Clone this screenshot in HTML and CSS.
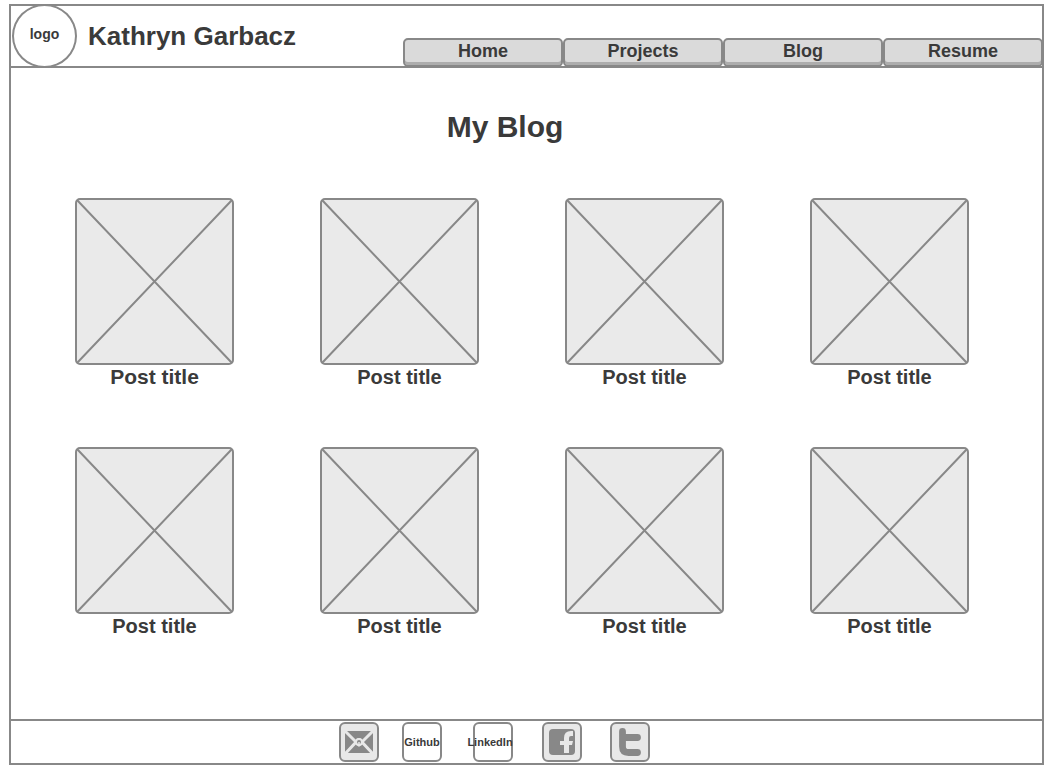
FILE: index.html
```html
<!DOCTYPE html>
<html lang="en">
<head>
<meta charset="utf-8">
<meta name="viewport" content="width=device-width, initial-scale=1">
<title>Kathryn Garbacz – My Blog</title>
<link rel="stylesheet" href="styles.css">
</head>
<body>
<svg width="0" height="0" class="defs" aria-hidden="true">
  <symbol id="placeholder" viewBox="0 0 159 167" preserveAspectRatio="none">
    <rect x="1" y="1" width="157" height="165" rx="4" fill="#eaeaea" stroke="#888" stroke-width="2"/>
    <path d="M2 2L157 165M157 2L2 165" fill="none" stroke="#888" stroke-width="2"/>
  </symbol>
</svg>
<div class="frame">
  <header class="header">
    <a class="logo" href="#">logo</a>
    <div class="name">Kathryn Garbacz</div>
    <nav class="tabs">
      <a class="tab" href="#">Home</a>
      <a class="tab" href="#">Projects</a>
      <a class="tab" href="#">Blog</a>
      <a class="tab" href="#">Resume</a>
    </nav>
  </header>
  <main class="main">
    <h1 class="heading">My Blog</h1>
    <div class="posts">
      <article class="post"><svg class="thumb" aria-hidden="true"><use href="#placeholder"/></svg><h2 class="title title-lead">Post title</h2></article>
      <article class="post"><svg class="thumb" aria-hidden="true"><use href="#placeholder"/></svg><h2 class="title">Post title</h2></article>
      <article class="post"><svg class="thumb" aria-hidden="true"><use href="#placeholder"/></svg><h2 class="title">Post title</h2></article>
      <article class="post"><svg class="thumb" aria-hidden="true"><use href="#placeholder"/></svg><h2 class="title">Post title</h2></article>
      <article class="post"><svg class="thumb" aria-hidden="true"><use href="#placeholder"/></svg><h2 class="title">Post title</h2></article>
      <article class="post"><svg class="thumb" aria-hidden="true"><use href="#placeholder"/></svg><h2 class="title">Post title</h2></article>
      <article class="post"><svg class="thumb" aria-hidden="true"><use href="#placeholder"/></svg><h2 class="title">Post title</h2></article>
      <article class="post"><svg class="thumb" aria-hidden="true"><use href="#placeholder"/></svg><h2 class="title">Post title</h2></article>
    </div>
  </main>
  <footer class="footer">
    <a class="social social-icon" href="#" aria-label="Email">
      <svg viewBox="2 2 36 36" width="36" height="36" aria-hidden="true">
        <rect x="6" y="9" width="28" height="22" fill="#888"/>
        <path d="M5 8L20 23L35 8M5 33L18 19Q20 16 22 19L35 33" fill="none" stroke="#e8e8e8" stroke-width="3"/>
        <circle cx="20" cy="20" r="3" fill="#888" stroke="#e8e8e8" stroke-width="2"/>
        <circle cx="20" cy="21" r="1" fill="#e8e8e8"/>
      </svg>
    </a>
    <a class="social" href="#">Github</a>
    <a class="social social-wide" href="#">LinkedIn</a>
    <a class="social social-icon" href="#" aria-label="Facebook">
      <svg viewBox="2 2 36 36" width="36" height="36" aria-hidden="true">
        <rect x="7" y="7" width="26" height="26" rx="4" fill="#888"/>
        <path d="M31 9V14H29Q27 14 27 16V19H31L30 23H27V31H22V23H18V19H22V16Q22 9 29 9Z" fill="#e8e8e8"/>
      </svg>
    </a>
    <a class="social social-icon" href="#" aria-label="Twitter">
      <svg viewBox="2 2 36 36" width="36" height="36" aria-hidden="true">
        <path d="M12.500 9.500V24.500Q12.500 30.500 18.500 30.500H27.500M12.500 15.500H27.500" fill="none" stroke="#888" stroke-width="6.800" stroke-linecap="round"/>
      </svg>
    </a>
  </footer>
</div>
</body>
</html>
```
FILE: styles.css
```css
* {
  box-sizing: border-box;
}

body {
  margin: 4px 7px 10px 9px;
  background: #fff;
  color: #3a3a3a;
  font-family: "Liberation Sans", Arial, sans-serif;
  font-weight: 700;
}

a {
  color: inherit;
  text-decoration: none;
}

.defs {
  position: absolute;
}

.frame {
  display: flex;
  flex-direction: column;
  min-height: calc(100vh - 14px);
  border: 2px solid #888;
}

.header {
  display: flex;
  align-items: center;
  height: 62px;
  border-bottom: 2px solid #888;
}

.logo {
  display: flex;
  align-items: center;
  justify-content: center;
  flex: none;
  width: 65px;
  height: 64px;
  margin: -2px 11px -2px 1px;
  padding-bottom: 4px;
  border: 2px solid #888;
  border-radius: 50%;
  font-size: 14px;
}

.name {
  flex: none;
  font-size: 26px;
  line-height: 30px;
}

.tabs {
  display: flex;
  align-self: flex-end;
  margin: 0 -1px -1px auto;
}

.tab {
  width: 160px;
  height: 29px;
  border: 2px solid #888;
  border-radius: 5px;
  background: #dadada;
  box-shadow: inset 0 -3px #adadad;
  font-size: 18px;
  line-height: 22px;
  text-align: center;
}

.main {
  flex: 1;
  padding: 41px 73px 40px 64px;
}

.heading {
  margin: 0 34px 53px 0;
  font-size: 30px;
  line-height: 36px;
  text-align: center;
}

.posts {
  display: grid;
  grid-template-columns: repeat(4, 159px);
  justify-content: space-between;
  row-gap: 58px;
}

.thumb {
  display: block;
  width: 100%;
  height: 167px;
}

.title {
  margin: 0;
  font-size: 20px;
  line-height: 24px;
  text-align: center;
}

.title-lead {
  font-size: 21px;
}

.footer {
  display: grid;
  grid-template-columns: 63px 71px 69px 68px 40px;
  justify-content: center;
  align-items: center;
  height: 44px;
  padding-right: 64px;
  border-top: 2px solid #888;
}

.social {
  display: flex;
  align-items: center;
  justify-content: center;
  width: 40px;
  height: 40px;
  border: 2px solid #888;
  border-radius: 6px;
  font-size: 11px;
}

.social-icon {
  background: #e8e8e8;
}

.social-wide {
  padding-right: 6px;
}
```
